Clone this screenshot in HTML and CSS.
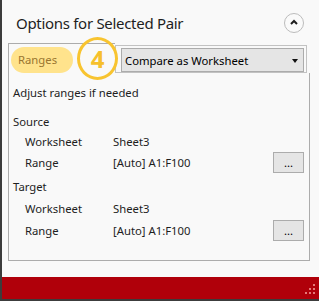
FILE: index.html
```html
<!DOCTYPE html>
<html>
<head>
<meta charset="utf-8">
<link rel="stylesheet" href="styles.css">
</head>
<body>
<div class="window">
  <header class="titlebar">
    <h1 class="title">Options for Selected Pair</h1>
    <button class="collapse" aria-label="Collapse">
      <svg width="10" height="8" viewBox="0 0 10 8"><polyline points="2,6 5,3 8,6" fill="none" stroke="#1e1e1e" stroke-width="2"/></svg>
    </button>
  </header>

  <section class="group">
    <div class="group-head">
      <div class="tab">
        <span class="pill">Ranges</span>
        <span class="badge">4</span>
      </div>
      <div class="frame">
        <div class="combo">
          <span class="combo-text">Compare as Worksheet</span>
          <span class="combo-arrow"></span>
        </div>
      </div>
    </div>
    <div class="group-body">
      <div class="line hint">Adjust ranges if needed</div>

      <div class="line section">Source</div>
      <div class="line field"><span class="label">Worksheet</span><span class="value">Sheet3</span></div>
      <div class="line field range"><span class="label">Range</span><span class="value">[Auto] A1:F100</span><button class="dots">...</button></div>

      <div class="line section target">Target</div>
      <div class="line field ws2"><span class="label">Worksheet</span><span class="value">Sheet3</span></div>
      <div class="line field range range2"><span class="label">Range</span><span class="value">[Auto] A1:F100</span><button class="dots">...</button></div>
    </div>
  </section>

  <footer class="statusbar">
    <svg class="grip" width="10" height="10" viewBox="0 0 10 10">
      <rect x="8" y="0" width="2" height="2"/>
      <rect x="4" y="4" width="2" height="2"/><rect x="8" y="4" width="2" height="2"/>
      <rect x="0" y="8" width="2" height="2"/><rect x="4" y="8" width="2" height="2"/><rect x="8" y="8" width="2" height="2"/>
    </svg>
  </footer>
</div>
</body>
</html>
```

FILE: styles.css
```css
* { box-sizing: border-box; }
html, body { margin: 0; padding: 0; }
body {
  width: 319px;
  height: 301px;
  overflow: hidden;
  background: #f9f9f9;
  font-family: "Noto Sans", "Open Sans", sans-serif;
  color: #1e1e1e;
}
.window {
  height: 301px;
  display: flex;
  flex-direction: column;
  border-left: 2px solid #3c3c3c;
  border-bottom: 2px solid #3c3c3c;
}
.titlebar {
  height: 43px;
  display: flex;
  align-items: center;
  justify-content: space-between;
  padding: 1px 15px 0 14px;
}
.title {
  margin: 2px 0 0;
  font-size: 15px;
  letter-spacing: -0.3px;
  font-weight: normal;
  line-height: 24px;
  color: #1e1e1e;
}
.collapse {
  width: 20px;
  height: 20px;
  padding: 0;
  border: 1px solid #bcbcbc;
  border-radius: 50%;
  background: #fafafa;
  display: flex;
  align-items: center;
  justify-content: center;
  margin-top: 1px;
}
.collapse svg { display: block; margin-top: -1px; }

.group {
  margin-left: 6px;
  width: 302px;
}
.group-head {
  display: flex;
  height: 30px;
}
.tab {
  position: relative;
  width: 107px;
  height: 30px;
  border-top: 1px solid #acacac;
  border-left: 1px solid #acacac;
  padding: 3px 0 0 2px;
}
.pill {
  display: block;
  width: 62px;
  height: 26px;
  border-radius: 13px;
  background: #ffe38c;
  color: #9a7630;
  font-size: 11.3px;
  line-height: 26px;
  padding-left: 7px;
}
.badge {
  position: absolute;
  left: 68px;
  top: -7px;
  width: 41px;
  height: 43px;
  border: 3px solid #f8c430;
  border-radius: 50%;
  color: #f6c02c;
  font-weight: bold;
  font-size: 24px;
  line-height: 37px;
  text-align: center;
}
.frame {
  margin-top: 2px;
  width: 192px;
  height: 28px;
  border: 1px solid #c2c2c2;
  padding: 2px 2px 0 5px;
}
.combo {
  height: 24px;
  border: 1px solid #acacac;
  background: #e5e5e5;
  display: flex;
  align-items: center;
  justify-content: space-between;
  padding: 0 5px 0 3px;
  font-size: 11.3px;
  color: #000;
}
.combo-arrow {
  width: 0;
  height: 0;
  border-left: 3.5px solid transparent;
  border-right: 3.5px solid transparent;
  border-top: 4px solid #111;
  margin-top: 1px;
}
.group-body {
  height: 188px;
  border: 1px solid #acacac;
  border-top: none;
  padding: 10px 5px 0 4px;
  font-size: 11.3px;
}
.line {
  height: 20px;
  line-height: 20px;
  display: flex;
  align-items: center;
}
.section { margin-top: 9px; }
.field { padding-left: 12px; }
.label { width: 88px; flex: none; }
.value { flex: 1; }
.range { height: 21px; }
.target { margin-top: 4px; }
.ws2 { margin-top: 2px; }
.range2 { margin-top: 1px; }
.dots {
  width: 31px;
  height: 21px;
  border: 1px solid #acacac;
  background: #e5e5e5;
  font-family: "Noto Sans", sans-serif;
  font-size: 11.3px;
  line-height: 17px;
  padding: 0;
  color: #000;
}
.statusbar {
  margin-top: auto;
  height: 22px;
  background: #b0000a;
  display: flex;
  justify-content: flex-end;
  align-items: flex-end;
  padding: 0 4px 5px 0;
}
.grip { display: block; fill: #e57878; }
```
